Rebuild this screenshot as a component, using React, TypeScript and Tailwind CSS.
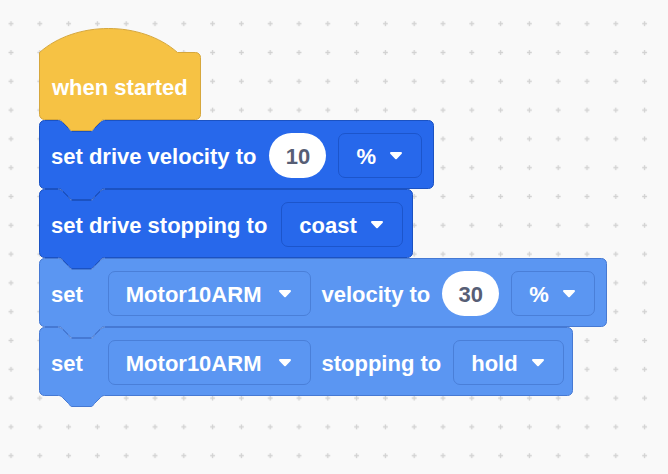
import React from "react";

const R = 5;
const A = 19;
const NOTCH = "c 2,0 3,1 4,2 l 6,6 c 1,1 2,3 3,3 h 20 c 1,0 2,-2 3,-3 l 6,-6 c 1,-1 2,-2 4,-2";
const TAB = "c -2,0 -3,1 -4,2 l -6,6 c -1,1 -2,3 -3,3 h -20 c -1,0 -2,-2 -3,-3 l -6,-6 c -1,-1 -2,-2 -4,-2";

function blockPath(w: number, h: number, hat: boolean): string {
  const x1 = w - 0.5;
  const y1 = h - 0.5;
  const top = hat
    ? `M 0.5,0.5 c 36,-32 102,-32 138,0 H ${x1 - R}`
    : `M 0.5,${0.5 + R} a ${R},${R} 0 0 1 ${R},-${R} H ${A + 0.5} ${NOTCH} H ${x1 - R}`;
  return `${top} a ${R},${R} 0 0 1 ${R},${R} V ${y1 - R} a ${R},${R} 0 0 1 -${R},${R} H ${A + 0.5 + 46} ${TAB} H ${0.5 + R} a ${R},${R} 0 0 1 -${R},-${R} Z`;
}

function Shape({ w, h, fill, stroke, hat = false }: { w: number; h: number; fill: string; stroke: string; hat?: boolean }) {
  return (
    <svg className="absolute left-0 top-0 overflow-visible" width={w} height={h}>
      <path d={blockPath(w, h, hat)} fill={fill} stroke={stroke} strokeWidth={1} strokeLinejoin="round" />
    </svg>
  );
}

function Caret() {
  return (
    <svg width="14" height="9" viewBox="0 0 14 9">
      <path d="M2 1 H12 a1 1 0 0 1 0.75 1.65 L7.75 7.9 a1 1 0 0 1 -1.5 0 L1.25 2.65 A1 1 0 0 1 2 1 Z" fill="#ffffff" />
    </svg>
  );
}

function Dropdown({ label, dark, wide = false }: { label: string; dark: boolean; wide?: boolean }) {
  const border = dark ? "border-[#1c55cb]" : "border-[#4a7fd8]";
  const gap = wide ? "gap-[17px]" : "gap-[13px]";
  return (
    <div className={`flex h-[45px] items-center rounded-[7px] border pl-[17px] pr-[18px] ${border} ${gap}`}>
      <span className="pt-[2px]">{label}</span>
      <Caret />
    </div>
  );
}

function Oval({ value }: { value: string }) {
  return (
    <div className="flex h-[45px] w-[57px] items-center justify-center rounded-full bg-white pt-[2px] text-[#575e75]">
      {value}
    </div>
  );
}

const DARK = "#2768eb";
const DARK_S = "#1b52c2";
const LIGHT = "#5b96f2";
const LIGHT_S = "#4679d3";

export default function App() {
  return (
    <div className="relative h-[474px] w-[668px] overflow-hidden bg-[#f9f9f9] font-['Liberation_Sans',Arial,sans-serif] text-[22px] font-bold leading-[26px] text-white">
      <svg className="absolute inset-0" width="668" height="474">
        <defs>
          <pattern id="grid" x="-3.4" y="9.3" width="28.8" height="28.8" patternUnits="userSpaceOnUse">
            <path d="M14.4 12 V16.8 M12 14.4 H16.8" stroke="#d2d2d2" strokeWidth="1.3" />
          </pattern>
        </defs>
        <rect width="668" height="474" fill="url(#grid)" />
      </svg>

      <div className="absolute left-[39px] top-[52px] flex flex-col items-start">
        <div className="relative z-50 h-[68px] w-[162px]">
          <Shape w={162} h={68} fill="#f6c244" stroke="#d6a73c" hat />
          <div className="relative flex h-full items-center pl-[13px] pt-[4px]">when started</div>
        </div>

        <div className="relative z-40 h-[69px] w-[395px]">
          <Shape w={395} h={69} fill={DARK} stroke={DARK_S} />
          <div className="relative flex h-full items-center gap-[12px] pl-[12px] pt-[2px]">
            <span className="mr-[1px] pt-[3px]">set drive velocity to</span>
            <Oval value="10" />
            <Dropdown label="%" dark />
          </div>
        </div>

        <div className="relative z-30 h-[69px] w-[374px]">
          <Shape w={374} h={69} fill={DARK} stroke={DARK_S} />
          <div className="relative flex h-full items-center gap-[14px] pl-[12px] pt-[2px]">
            <span className="pt-[3px]">set drive stopping to</span>
            <Dropdown label="coast" dark />
          </div>
        </div>

        <div className="relative z-20 h-[69px] w-[568px]">
          <Shape w={568} h={69} fill={LIGHT} stroke={LIGHT_S} />
          <div className="relative flex h-full items-center gap-[12px] pl-[12px] pt-[2px]">
            <span className="mr-[13px] pt-[3px]">set</span>
            <Dropdown label="Motor10ARM" dark={false} wide />
            <span className="-ml-[2px] pt-[3px]">velocity to</span>
            <Oval value="30" />
            <Dropdown label="%" dark={false} />
          </div>
        </div>

        <div className="relative z-10 h-[69px] w-[534px]">
          <Shape w={534} h={69} fill={LIGHT} stroke={LIGHT_S} />
          <div className="relative flex h-full items-center gap-[12px] pl-[12px] pt-[2px]">
            <span className="mr-[13px] pt-[3px]">set</span>
            <Dropdown label="Motor10ARM" dark={false} wide />
            <span className="-ml-[2px] pt-[3px]">stopping to</span>
            <Dropdown label="hold" dark={false} />
          </div>
        </div>
      </div>
    </div>
  );
}
